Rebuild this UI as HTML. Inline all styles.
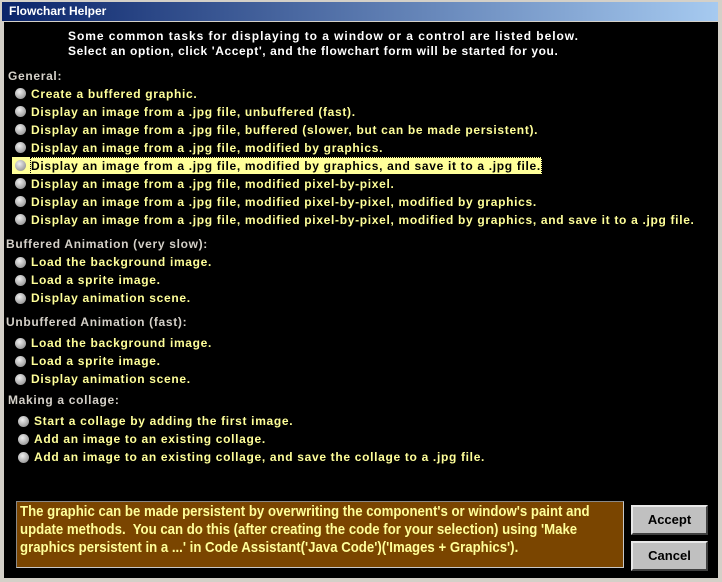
<!DOCTYPE html>
<html><head><style>
body{margin:0;width:722px;height:582px;background:#d4d0c8;position:relative;overflow:hidden;font-family:"Liberation Sans",sans-serif;}
.tb{position:absolute;left:2px;top:2px;width:716px;height:19px;background:linear-gradient(90deg,#0a246a,#a6caf0);color:#fff;font-weight:bold;font-size:12px;line-height:19px;padding-left:7px;box-sizing:border-box;}
.c{position:absolute;left:4px;top:22px;width:714px;height:556px;background:#000;}
.t{position:absolute;font-weight:bold;font-size:12px;letter-spacing:0.68px;white-space:nowrap;line-height:16px;}
.h{color:#d4d0c8;}
.y{color:#ffff99;}
.w{color:#fff;letter-spacing:0.95px;}
.r{position:absolute;width:11px;height:11px;border-radius:50%;background:radial-gradient(circle at 40% 35%,#f0f0f0,#a0a0a0 70%,#808080);}
.box{position:absolute;left:16px;top:501px;width:608px;height:67px;background:#7a4500;border:1px solid #c8c8c8;border-top-color:#888;border-left-color:#888;color:#ffff99;font-weight:bold;font-size:15px;line-height:18px;padding:1px 3px;box-sizing:border-box;}
.box span{display:inline-block;transform:scaleX(0.88);transform-origin:left;white-space:nowrap;}
.btn{position:absolute;left:631px;width:77px;height:30px;background:#c0c0c0;border:2px solid;border-color:#e8e8e8 #404040 #404040 #e8e8e8;box-sizing:border-box;color:#000;font-weight:bold;font-size:13px;text-align:center;line-height:26px;}
</style></head><body>
<div class="tb">Flowchart Helper</div>
<div class="c"></div>
<div class="t w" style="left:68px;top:28px">Some common tasks for displaying to a window or a control are listed below.</div>
<div class="t w" style="left:68px;top:43px;letter-spacing:0.6px">Select an option, click 'Accept', and the flowchart form will be started for you.</div>

<div class="t h" style="left:8px;top:68px">General:</div>
<div class="r" style="left:15px;top:88px"></div><div class="t y" style="left:31px;top:86px">Create a buffered graphic.</div>
<div class="r" style="left:15px;top:106px"></div><div class="t y" style="left:31px;top:104px">Display an image from a .jpg file, unbuffered (fast).</div>
<div class="r" style="left:15px;top:124px"></div><div class="t y" style="left:31px;top:122px">Display an image from a .jpg file, buffered (slower, but can be made persistent).</div>
<div class="r" style="left:15px;top:142px"></div><div class="t y" style="left:31px;top:140px">Display an image from a .jpg file, modified by graphics.</div>
<div style="position:absolute;left:12px;top:157px;width:530px;height:17px;background:#ffff99;"></div>
<div class="r" style="left:15px;top:160px"></div><div class="t" style="left:31px;top:158px;color:#000;outline:1px dotted #000">Display an image from a .jpg file, modified by graphics, and save it to a .jpg file.</div>
<div class="r" style="left:15px;top:178px"></div><div class="t y" style="left:31px;top:176px">Display an image from a .jpg file, modified pixel-by-pixel.</div>
<div class="r" style="left:15px;top:196px"></div><div class="t y" style="left:31px;top:194px">Display an image from a .jpg file, modified pixel-by-pixel, modified by graphics.</div>
<div class="r" style="left:15px;top:214px"></div><div class="t y" style="left:31px;top:212px">Display an image from a .jpg file, modified pixel-by-pixel, modified by graphics, and save it to a .jpg file.</div>

<div class="t h" style="left:6px;top:236px">Buffered Animation (very slow):</div>
<div class="r" style="left:15px;top:257px"></div><div class="t y" style="left:31px;top:254px">Load the background image.</div>
<div class="r" style="left:15px;top:275px"></div><div class="t y" style="left:31px;top:272px">Load a sprite image.</div>
<div class="r" style="left:15px;top:293px"></div><div class="t y" style="left:31px;top:290px">Display animation scene.</div>

<div class="t h" style="left:6px;top:314px">Unbuffered Animation (fast):</div>
<div class="r" style="left:15px;top:338px"></div><div class="t y" style="left:31px;top:335px">Load the background image.</div>
<div class="r" style="left:15px;top:356px"></div><div class="t y" style="left:31px;top:353px">Load a sprite image.</div>
<div class="r" style="left:15px;top:374px"></div><div class="t y" style="left:31px;top:371px">Display animation scene.</div>

<div class="t h" style="left:8px;top:392px">Making a collage:</div>
<div class="r" style="left:18px;top:416px"></div><div class="t y" style="left:34px;top:413px">Start a collage by adding the first image.</div>
<div class="r" style="left:18px;top:434px"></div><div class="t y" style="left:34px;top:431px">Add an image to an existing collage.</div>
<div class="r" style="left:18px;top:452px"></div><div class="t y" style="left:34px;top:449px">Add an image to an existing collage, and save the collage to a .jpg file.</div>

<div class="box"><span>The graphic can be made persistent by overwriting the component's or window's paint and</span><br><span>update methods.&nbsp; You can do this (after creating the code for your selection) using 'Make</span><br><span>graphics persistent in a ...' in Code Assistant('Java Code')('Images + Graphics').</span></div>
<div class="btn" style="top:505px">Accept</div>
<div class="btn" style="top:541px">Cancel</div>
</body></html>
